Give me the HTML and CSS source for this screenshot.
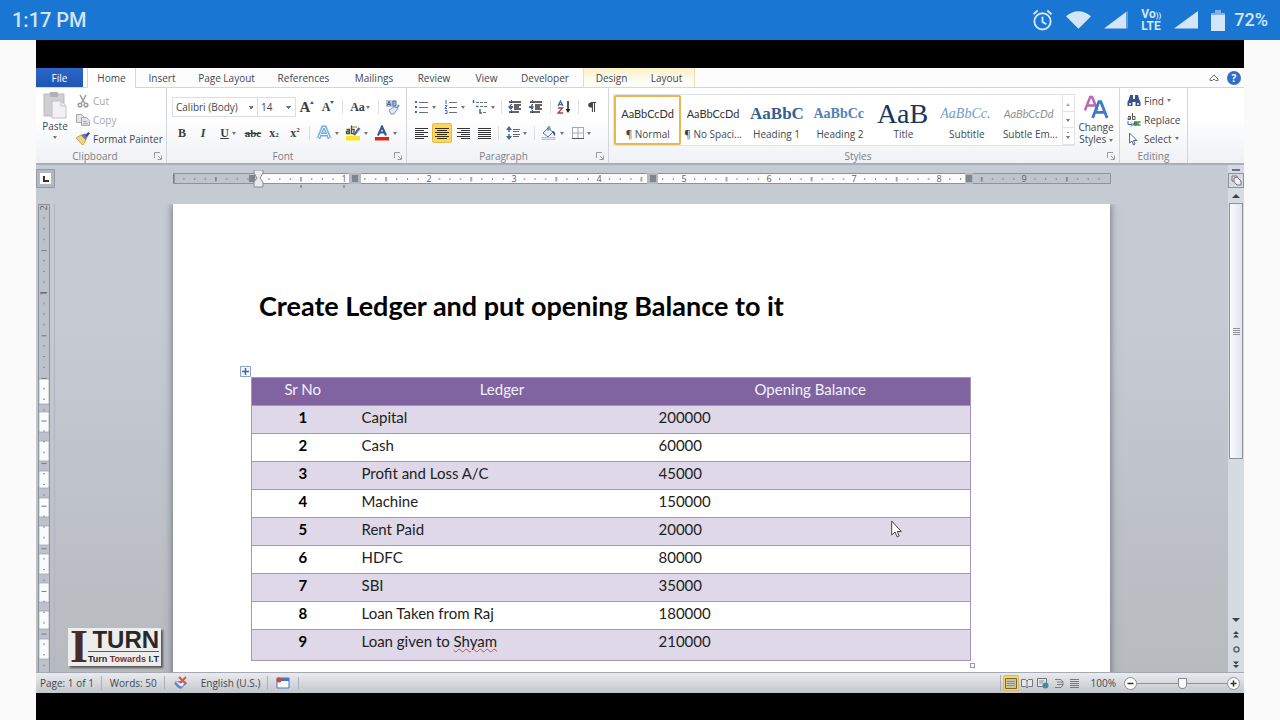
FILE: index.html
```html
<!DOCTYPE html>
<html lang="en">

<head>
    <meta charset="UTF-8" />
    <meta name="viewport" content="width=device-width, initial-scale=1.0" />
    <title>Create Ledger</title>
    <link rel="stylesheet" href="styles.css">
</head>

<body>
    <header class="phone-bar">
        <span class="clock">1:17 PM</span>
        <div class="phone-icons">
            <svg width="21" height="22" viewBox="0 0 22 23" fill="none" stroke="#d3e6f8" stroke-width="2"><circle cx="11" cy="13" r="8.500" /><path d="M11 8v5.500l4 2.500M1.500 5.500l4.500-4M20.500 5.500l-4.500-4" /></svg>
            <svg width="25" height="18" viewBox="0 0 26 18" fill="#d3e6f8"><path d="M0 5Q13-5 26 5L13 18z" /></svg>
            <svg width="24" height="18" viewBox="0 0 24 18"><path d="M0 17.500L22 1v16.500z" fill="#d3e6f8" /><path d="M22 1l2-1v17.500h-2z" fill="#5c9fe0" /></svg>
            <span class="volte"><span>Vo<small>))</small></span><span>LTE</span></span>
            <svg width="24" height="18" viewBox="0 0 24 18"><path d="M0 17.500L24 0v17.500z" fill="#d3e6f8" /></svg>
            <svg width="14" height="21" viewBox="0 0 14 21"><path d="M4 0h6v3h4v3H0V3h4z" fill="#7fb4e6" /><path d="M0 5h14v16H0z" fill="#d3e6f8" /></svg>
            <span class="battery">72%</span>
        </div>
    </header>

    <main class="video">
        <div class="word">
            <nav class="tabs">
                <button class="tab file">File</button>
                <button class="tab home">Home</button>
                <button class="tab insert">Insert</button>
                <button class="tab wide">Page Layout</button>
                <button class="tab wide">References</button>
                <button class="tab mail">Mailings</button>
                <button class="tab review">Review</button>
                <button class="tab view">View</button>
                <button class="tab dev">Developer</button>
                <div class="tool-tabs">
                    <button class="tab">Design</button>
                    <button class="tab">Layout</button>
                </div>
                <div class="help">
                    <button aria-label="Minimize the ribbon"><svg width="10" height="8" viewBox="0 0 10 8" fill="none" stroke="#6a6f78"><path d="M1 5l4-4 4 4v1.500H6.500L5 5 3.500 6.500H1z" /></svg></button>
                    <button class="help-btn" aria-label="Help">?</button>
                </div>
            </nav>

            <section class="ribbon">
                <div class="group clipboard">
                    <div class="group-body">
                        <button class="paste">
                            <svg width="26" height="28" viewBox="0 0 26 28"><path d="M2 3h20v22H2z" fill="#cfcfd1" stroke="#b9b9bc" /><path d="M8 1h8v5H8z" fill="#b2b2b5" /><path d="M10 10h9l5 5v12H10z" fill="#f1f1f2" stroke="#c2c2c5" /><path d="M19 10v5h5" fill="none" stroke="#c2c2c5" /></svg>
                            <span>Paste</span>
                            <i class="arrow"></i>
                        </button>
                        <div class="stack">
                            <button class="row off"><svg width="14" height="14" viewBox="0 0 14 14" fill="none" stroke="#9b9b9e" stroke-width="1.500"><path d="M4 1l4.500 8M10 1L5.500 9" /><circle cx="4" cy="11" r="1.800" /><circle cx="10" cy="11" r="1.800" /></svg>Cut</button>
                            <button class="row off"><svg width="14" height="14" viewBox="0 0 14 14" fill="#e3e3e5" stroke="#a9a9ac"><path d="M.5 1.500h5l2 2v6h-7z" /><path d="M5.500 4.500h5l3 3v5h-8z" /><path d="M7 8.500h4M7 10.500h5" /></svg>Copy</button>
                            <button class="row"><svg width="14" height="14" viewBox="0 0 14 14"><path d="M0 6l5-3 5 5-3 5q-2-1-4-4z" fill="#f2d27a" stroke="#b18a35" stroke-width=".7" /><path d="M5 3l4-1.500 2.500 3L10 8z" fill="#6974b8" /><path d="M9 3l3.500-3L14 1.500 11 5z" fill="#434a86" /></svg>Format Painter</button>
                        </div>
                    </div>
                    <div class="group-name">Clipboard<svg class="launch" width="8" height="8"><use href="#launch" /></svg></div>
                </div>

                <div class="group font">
                    <div class="group-body rows">
                        <div class="tools">
                            <div class="combos">
                                <select class="face" aria-label="Font"><option>Calibri (Body)</option></select>
                                <select class="size" aria-label="Font size"><option>14</option></select>
                            </div>
                            <button class="tool serif grow" aria-label="Grow font">A<i class="arrow up dark"></i></button>
                            <button class="tool serif" aria-label="Shrink font">A<i class="arrow dark"></i></button>
                            <span class="sep"></span>
                            <button class="tool dd serif case" aria-label="Change case">Aa<i class="arrow"></i></button>
                            <span class="sep"></span>
                            <button class="tool" aria-label="Clear formatting"><svg width="16" height="16" viewBox="0 0 16 16"><path d="M2 1h11v7H2z" fill="#b9c9e2" /><path d="M3 7l2-5 2 5M3.500 5.500h3M9 2v5h2q2-1.500 0-2.500 1.500-1 0-2.500z" fill="none" stroke="#4f668f" /><path d="M5 11l5-3 4 1-4 6H7z" fill="#dfe8f6" stroke="#7f97bf" /><path d="M13 9l2-3" stroke="#7f97bf" stroke-width="2" /></svg></button>
                        </div>
                        <div class="tools">
                            <button class="tool serif bold">B</button>
                            <button class="tool serif italic">I</button>
                            <button class="tool dd serif under">U<i class="arrow"></i></button>
                            <button class="tool serif strike">abc</button>
                            <button class="tool serif">x<sub>2</sub></button>
                            <button class="tool serif">x<sup>2</sup></button>
                            <span class="sep"></span>
                            <button class="tool dd" aria-label="Text effects"><svg width="16" height="16" viewBox="0 0 16 16" fill="none"><path d="M2.500 13.500L7 2.500h2l4.500 11M5 9.500h6" stroke="#a3cdf0" stroke-width="4.500" /><path d="M2.500 13.500L7 2.500h2l4.500 11M5 9.500h6" stroke="#5f9fd6" stroke-width="2.500" /><path d="M2.500 13.500L7 2.500h2l4.500 11M5 9.500h6" stroke="#fff" /></svg><i class="arrow"></i></button>
                            <button class="tool dd" aria-label="Text highlight colour"><svg width="16" height="16" viewBox="0 0 16 16"><path d="M1 11h14v4.500H1z" fill="#fbe62b" /><path d="M1.500 4.500h3v4h-3v-2h3M6.500 .5v8h2.500v-4H6.500" fill="none" stroke="#57501d" stroke-width="1.300" /><path d="M9 10l5.500-7" stroke="#596ca0" stroke-width="2.500" /><path d="M7 2h5" stroke="#8b8133" /></svg><i class="arrow"></i></button>
                            <button class="tool dd" aria-label="Font colour"><svg width="16" height="16" viewBox="0 0 16 16"><path d="M1 12h14v3.500H1z" fill="#e02418" /><path d="M4 10.500L8 1.500l4 9M5.500 7.500h5" fill="none" stroke="#34548f" stroke-width="2" /></svg><i class="arrow"></i></button>
                        </div>
                    </div>
                    <div class="group-name">Font<svg class="launch" width="8" height="8"><use href="#launch" /></svg></div>
                </div>

                <div class="group paragraph">
                    <div class="group-body rows">
                        <div class="tools">
                            <button class="tool dd" aria-label="Bullets"><svg width="14" height="14" viewBox="0 0 14 14"><path d="M0 1h2v2H0zM0 6h2v2H0zM0 11h2v2H0z" fill="#3e66ad" /><path d="M4 2.500h9M4 7.500h9M4 12.500h9" stroke="#6b6f76" /></svg><i class="arrow"></i></button>
                            <button class="tool dd" aria-label="Numbering"><svg width="14" height="14" viewBox="0 0 14 14"><path d="M2 0v4M1 5.500h2l-2 3h2M1 10.500h2v3H1" stroke="#3e66ad" fill="none" /><path d="M5 2.500h8M5 7.500h8M5 12.500h8" stroke="#6b6f76" /></svg><i class="arrow"></i></button>
                            <button class="tool dd" aria-label="Multilevel list"><svg width="16" height="14" viewBox="0 0 16 14"><path d="M1.500 0v3M4 6.500h2.500M8 9v4h2" stroke="#3e66ad" fill="none" stroke-width="1.500" /><path d="M4 2.500h11M8 6.500h7M11 12.500h4" stroke="#6b6f76" stroke-dasharray="3 1" /></svg><i class="arrow"></i></button>
                            <span class="sep"></span>
                            <button class="tool" aria-label="Decrease indent"><svg width="14" height="14" viewBox="0 0 14 14"><path d="M3.500 0v14" stroke="#555" stroke-dasharray="1 1" /><path d="M1 2h12M6 5h7M6 7h5M6 9h7M1 12h10" stroke="#333" stroke-width="1.500" /><path d="M0 7l3-3v2h2v2H3v2z" fill="#3e66ad" /></svg></button>
                            <button class="tool" aria-label="Increase indent"><svg width="14" height="14" viewBox="0 0 14 14"><path d="M3.500 0v14" stroke="#555" stroke-dasharray="1 1" /><path d="M1 2h12M6 5h7M6 7h5M6 9h7M1 12h10" stroke="#333" stroke-width="1.500" /><path d="M5 7L2 4v2H0v2h2v2z" fill="#3e66ad" /></svg></button>
                            <span class="sep"></span>
                            <button class="tool" aria-label="Sort"><svg width="14" height="14" viewBox="0 0 14 14" fill="none"><path d="M1 6l2.500-5L6 6M2 4.500h3" stroke="#3e66ad" stroke-width="1.300" /><path d="M1 8h4.500L1 13h5" stroke="#b43a3a" stroke-width="1.300" /><path d="M11 1v9" stroke="#222" stroke-width="1.500" /><path d="M8.500 9h5L11 13z" fill="#222" /></svg></button>
                            <span class="sep"></span>
                            <button class="tool" aria-label="Show marks"><svg width="10" height="12" viewBox="0 0 12 14"><path d="M6 1.500H4.500a3 3 0 0 0 0 6H6z" fill="#444" /><path d="M5 1.500h6M6.500 1.500V13M9 1.500V13" stroke="#444" fill="none" stroke-width="1.300" /></svg></button>
                        </div>
                        <div class="tools">
                            <button class="tool" aria-label="Align left"><svg width="13" height="12" viewBox="0 0 13 12"><path d="M0 1.500h13M0 3.500h9M0 5.500h13M0 7.500h9M0 9.500h13M0 11.500h9" stroke="#333" /></svg></button>
                            <button class="tool on" aria-label="Center"><svg width="14" height="12" viewBox="0 0 14 12"><path d="M0 1.500h14M2 3.500h10M0 5.500h14M2 7.500h10M0 9.500h14M2 11.500h10" stroke="#3c300c" /></svg></button>
                            <button class="tool" aria-label="Align right"><svg width="13" height="12" viewBox="0 0 13 12"><path d="M0 1.500h13M4 3.500h9M0 5.500h13M4 7.500h9M0 9.500h13M4 11.500h9" stroke="#333" /></svg></button>
                            <button class="tool" aria-label="Justify"><svg width="13" height="12" viewBox="0 0 13 12"><path d="M0 1.500h13M0 3.500h13M0 5.500h13M0 7.500h13M0 9.500h13M0 11.500h13" stroke="#333" /></svg></button>
                            <span class="sep"></span>
                            <button class="tool dd" aria-label="Line spacing"><svg width="14" height="14" viewBox="0 0 14 14"><path d="M3 2v10" stroke="#3e66ad" stroke-width="1.500" stroke-dasharray="4 2" /><path d="M0 4l3-4 3 4zM0 10l3 4 3-4z" fill="#3e66ad" /><path d="M7 3.500h7M7 5.500h6M7 8.500h7M7 10.500h6" stroke="#666" /></svg><i class="arrow"></i></button>
                            <span class="sep"></span>
                            <button class="tool dd" aria-label="Shading"><svg width="16" height="14" viewBox="0 0 16 14"><path d="M2 7l5-5 5 4-5 5z" fill="#eef3fa" stroke="#55719f" /><path d="M7 5V1q2-1.500 2 1v2" fill="none" stroke="#55719f" /><path d="M11 5q4 0 3 5-1 0-2-3z" fill="#2e5299" /><path d="M1 11.500h13v2H1z" fill="#dde4ee" stroke="#98a6bd" stroke-width=".6" /></svg><i class="arrow"></i></button>
                            <button class="tool dd" aria-label="Borders"><svg width="12" height="12" viewBox="0 0 12 12" fill="none"><path d="M.5 0v11M6 0v11M11.500 0v11M0 .5h12M0 6h12" stroke="#a5a8ae" /><path d="M0 11.500h12" stroke="#555" /></svg><i class="arrow"></i></button>
                        </div>
                    </div>
                    <div class="group-name">Paragraph<svg class="launch" width="8" height="8"><use href="#launch" /></svg></div>
                </div>

                <div class="group styles">
                    <div class="group-body">
                        <div class="gallery">
                            <button class="style picked"><span class="sample">AaBbCcDd</span><span>¶ Normal</span></button>
                            <button class="style"><span class="sample">AaBbCcDd</span><span>¶ No Spaci...</span></button>
                            <button class="style"><span class="sample h1">AaBbC</span><span>Heading 1</span></button>
                            <button class="style"><span class="sample h2">AaBbCc</span><span>Heading 2</span></button>
                            <button class="style"><span class="sample title">AaB</span><span>Title</span></button>
                            <button class="style"><span class="sample subtitle">AaBbCc.</span><span>Subtitle</span></button>
                            <button class="style"><span class="sample subtle">AaBbCcDd</span><span>Subtle Em...</span></button>
                            <div class="gallery-nav">
                                <button aria-label="Previous row"><i class="arrow up"></i></button>
                                <button aria-label="Next row"><i class="arrow"></i></button>
                                <button aria-label="More styles"><i class="arrow more"></i></button>
                            </div>
                        </div>
                        <button class="change">
                            <svg width="26" height="27" viewBox="0 0 26 28" fill="none"><path d="M1.500 17L7 3h2l5.500 14M4 12h8" stroke="#c063b4" stroke-width="2.600" /><path d="M9.500 25L16 8h2l6.500 17M12 19h10" stroke="#4079c6" stroke-width="3" /></svg>
                            <span>Change</span>
                            <span>Styles <i class="arrow"></i></span>
                        </button>
                    </div>
                    <div class="group-name">Styles<svg class="launch" width="8" height="8"><use href="#launch" /></svg></div>
                </div>

                <div class="group editing">
                    <div class="group-body">
                        <div class="stack">
                            <button class="row"><svg width="14" height="14" viewBox="0 0 14 14" fill="#35548c"><path d="M3 1h3v4h2V1h3l1 4 1.500 3v4H8.500V8h-3v4H.5V8L2 5z" /><path d="M2 9h2v2H2zM10 9h2v2h-2z" fill="#c3d3ee" /></svg>Find <i class="arrow"></i></button>
                            <button class="row"><svg width="14" height="14" viewBox="0 0 14 14" fill="none"><path d="M1 3.500h2.500v3H1v-1.500h2.500M5.500 0v6.500H8v-3H5.500" stroke="#555" /><path d="M1 8v3.500h4M4 9.500l2 2-2 2" stroke="#3e66ad" /><path d="M7 9h2.500v3H7v-1.500h2.500M13.500 9H11v3h2.500" stroke="#3a8a48" stroke-width="1.300" /></svg>Replace</button>
                            <button class="row"><svg width="14" height="14" viewBox="0 0 14 14"><path d="M2.500 1v10L5 9l1.500 4 1.500-1-1.500-3.500H10z" fill="#fff" stroke="#4f6791" /></svg>Select <i class="arrow"></i></button>
                        </div>
                    </div>
                    <div class="group-name">Editing</div>
                </div>
            </section>

            <section class="workspace">
                <div class="corner"><button class="tab-stop" aria-label="Tab selector"><svg width="6" height="6" viewBox="0 0 6 6"><path d="M1 0v5h5" fill="none" stroke="#333" stroke-width="2" /></svg></button></div>

                <div class="ruler-top">
                    <svg width="938" height="18" viewBox="0 0 938 18">
                        <defs>
                            <pattern id="ticks" x="85.500" y="0" width="85.100" height="10" patternUnits="userSpaceOnUse">
                                <path d="M10.600 4v2M21.300 4v2M31.900 4v2M53.200 4v2M63.800 4v2M74.500 4v2" stroke="#85888f" />
                                <path d="M42.500 3v4.500" stroke="#55585f" />
                            </pattern>
                        </defs>
                        <path d="M.5 3.500h937v10H.5z" fill="#c0c4cc" stroke="#8e929b" />
                        <path d="M86 4h90v9H86zM188 4h286v9H188zM485 4h307v9H485z" fill="#fbfbfc" />
                        <path d="M1 0h936v9H1z" fill="url(#ticks)" transform="translate(0 4)" />
                        <path d="M176 3h12v11h-12zM474 3h11v11h-11zM792 3h8v11h-8z" fill="#b4b8c0" />
                        <path d="M179 5h6v7h-6zM477 5h6v7h-6zM793 5h6v7h-6zM76 5h6v7h-6z" fill="#80848d" />
                        <path d="M81 0h9v3l-3 5 3 4v5h-9v-5l3-4-3-5z" fill="#ebebed" stroke="#888b92" />
                        <g class="ruler-num">
                            <text x="171" y="12">1</text><text x="256" y="12">2</text><text x="341" y="12">3</text>
                            <text x="426" y="12">4</text><text x="511" y="12">5</text><text x="596" y="12">6</text>
                            <text x="681" y="12">7</text><text x="766" y="12">8</text><text x="851" y="12">9</text>
                        </g>
                        <path d="M1 4v9M128 15v3M171 15v3" stroke="#666a72" />
                    </svg>
                </div>

                <div class="ruler-side">
                    <svg width="12" height="468" viewBox="0 0 12 468">
                        <defs>
                            <pattern id="side-ticks" x="0" y="3.500" width="12" height="42.600" patternUnits="userSpaceOnUse">
                                <path d="M5 10.600h2M5 21.300h2M5 31.900h2" stroke="#85888f" />
                                <path d="M3.500 .5h5" stroke="#74777e" />
                            </pattern>
                        </defs>
                        <path d="M.5 .5h11v480H.5z" fill="#bdc1ca" stroke="#8e929b" />
                        <path d="M1 175h10v25H1zM1 208h10v20H1zM1 237h10v20H1zM1 267h10v17H1zM1 294h10v19H1zM1 322h10v19H1zM1 350h10v20H1zM1 379h10v19H1zM1 407h10v18H1zM1 435h10v20H1z" fill="#fafbfc" stroke="#9da1aa" stroke-width=".7" />
                        <path d="M0 8h12v460H0z" fill="url(#side-ticks)" />
                        <g class="ruler-num"><text transform="translate(9 4) rotate(-90)">2</text><text transform="translate(9 89) rotate(-90)">1</text></g>
                    </svg>
                </div>

                <div class="canvas">
                    <article class="page">
                        <h1>Create Ledger and put opening Balance to it</h1>
                        <div class="table-wrap">
                            <svg class="move" width="11" height="11" viewBox="0 0 11 11"><path d="M.5 .5h10v10H.5z" fill="#f4f8fd" stroke="#8aa4c8" /><path d="M5.500 2v7M2 5.500h7" stroke="#3f66a5" stroke-width="1.500" /></svg>
                            <table>
                                <colgroup><col class="col-no"><col class="col-ledger"><col></colgroup>
                                <thead>
                                    <tr><th><span class="typo">Sr</span> No</th><th>Ledger</th><th>Opening Balance</th></tr>
                                </thead>
                                <tbody>
                                    <tr><th>1</th><td>Capital</td><td>200000</td></tr>
                                    <tr><th>2</th><td>Cash</td><td>60000</td></tr>
                                    <tr><th>3</th><td>Profit and Loss A/C</td><td>45000</td></tr>
                                    <tr><th>4</th><td>Machine</td><td>150000</td></tr>
                                    <tr><th>5</th><td>Rent Paid</td><td>20000</td></tr>
                                    <tr><th>6</th><td>HDFC</td><td>80000</td></tr>
                                    <tr><th>7</th><td>SBI</td><td>35000</td></tr>
                                    <tr><th>8</th><td>Loan Taken from Raj</td><td>180000</td></tr>
                                    <tr><th>9</th><td>Loan given to <span class="typo">Shyam</span></td><td>210000</td></tr>
                                </tbody>
                            </table>
                            <span class="resize"></span>
                            <svg class="pointer" width="11" height="18" viewBox="0 0 11 18"><path d="M.7 1v14l3.300-3 2.200 5 2-1-2-4.500h4.100z" fill="#fff" stroke="#45434f" /></svg>
                        </div>
                    </article>
                </div>

                <div class="scroll">
                    <span class="split"></span>
                    <button class="browse" aria-label="View ruler"><svg width="11" height="11" viewBox="0 0 11 11" fill="#f3eef3" stroke="#71717c"><path d="M1 1h5v5H1z" /><path d="M3 3l3-1 4 4v4H6L3 7z" /></svg></button>
                    <button class="step" aria-label="Scroll up"><i class="arrow up big"></i></button>
                    <div class="thumb"><span></span></div>
                    <div class="track"></div>
                    <button class="step" aria-label="Scroll down"><i class="arrow big"></i></button>
                    <button class="step" aria-label="Previous page"><svg width="6" height="7" viewBox="0 0 6 7" fill="#3f434b"><path d="M3 0l3 3H0zM3 3.500l3 3H0z" /></svg></button>
                    <button class="step" aria-label="Browse object"><svg width="7" height="7" viewBox="0 0 7 7" fill="none" stroke="#62666e" stroke-width="1.500"><circle cx="3.500" cy="3.500" r="2.500" /></svg></button>
                    <button class="step" aria-label="Next page"><svg width="6" height="7" viewBox="0 0 6 7" fill="#3f434b"><path d="M3 3.500l3-3H0zM3 7l3-3H0z" /></svg></button>
                </div>

                <div class="logo">
                    <span class="logo-i">I</span>
                    <div class="logo-text">
                        <strong>TURN</strong>
                        <small>Turn <em>Towards</em> I.T</small>
                    </div>
                </div>
            </section>

            <footer class="status">
                <span class="cell">Page: 1 of 1</span>
                <span class="cell">Words: 50</span>
                <button class="proof" aria-label="Proofing errors"><svg width="16" height="14" viewBox="0 0 16 14"><path d="M1 7l5-2 8 2-6 6q-4-1-7-6z" fill="#5d87c9" /><path d="M2 5l5 2 6-2-4 6q-4-2-7-6z" fill="#f7f9fc" stroke="#8ba0c3" stroke-width=".6" /><path d="M6 1l7 7M13 1L7 7" stroke="#e0553b" stroke-width="2" /></svg></button>
                <span class="cell">English (U.S.)</span>
                <button class="macro" aria-label="Record macro"><svg width="14" height="12" viewBox="0 0 14 12"><path d="M1 1h12v10H1z" fill="#f6f9fe" stroke="#4a76bc" /><path d="M1 1h12v3H1z" fill="#4a76bc" /><circle cx="3" cy="3" r="2.500" fill="#d8452f" /></svg></button>
                <div class="views">
                    <button class="on" aria-label="Print layout"><svg width="12" height="11" viewBox="0 0 12 11"><path d="M.5 .5h11v10H.5z" fill="#c8c3a0" stroke="#6e6748" /><path d="M2 3.500h8M2 5.500h8M2 7.500h8" stroke="#99926a" /></svg></button>
                    <button aria-label="Full screen reading"><svg width="12" height="11" viewBox="0 0 12 11" fill="#e6e7ea" stroke="#72757c"><path d="M.5 1.500h4L6 3l1.500-1.500h4v7h-4L6 10 4.500 8.500h-4zM6 3v7" /></svg></button>
                    <button aria-label="Web layout"><svg width="12" height="11" viewBox="0 0 12 11"><path d="M.5 .5h9v8h-9z" fill="#e6e7ea" stroke="#72757c" /><path d="M2 3h5M2 5h4" stroke="#8b8e95" /><circle cx="8.500" cy="7.500" r="3" fill="#3f8f94" /></svg></button>
                    <button aria-label="Outline"><svg width="12" height="11" viewBox="0 0 12 11" fill="none" stroke="#7a7d84"><path d="M2 1.500h6M4 4h6M4 6.500h6M2 9.500h6M8 1.500l2 2.500v3l-2 2.500" /></svg></button>
                    <button aria-label="Draft"><svg width="12" height="11" viewBox="0 0 12 11"><path d="M1 1.500h9M1 3.500h9M1 5.500h9M1 7.500h9M1 9.500h9" stroke="#74777e" /></svg></button>
                </div>
                <label for="zoom">100%</label>
                <button class="round" aria-label="Zoom out"><svg width="13" height="13" viewBox="0 0 13 13" fill="#fdfdfd" stroke="#8b8e95"><circle cx="6.500" cy="6.500" r="6" /><path d="M3.500 6.500h6" stroke="#333" stroke-width="1.500" /></svg></button>
                <input id="zoom" type="range" min="0" max="200" value="100">
                <button class="round" aria-label="Zoom in"><svg width="13" height="13" viewBox="0 0 13 13" fill="#fdfdfd" stroke="#8b8e95"><circle cx="6.500" cy="6.500" r="6" /><path d="M3.500 6.500h6M6.500 3.500v6" stroke="#333" stroke-width="1.500" /></svg></button>
            </footer>
        </div>
    </main>

    <svg width="0" height="0" class="defs">
        <symbol id="launch" viewBox="0 0 8 8"><path d="M.5 6V.5H6M4 4l3 3M7.500 3.500v4h-4" fill="none" stroke="#9a9da5" /></symbol>
    </svg>
</body>

</html>
```
FILE: styles.css
```css
:root {
    --phone: #1976d2;
    --phone-light: #d3e6f8;
    --line: #d3d6dc;
    --text: #43474f;
    --muted: #7a7f88;
    --purple: #8064a2;
    --lilac: #dfd8e8;
    --gold: #e5b94f;
}

* {
    margin: 0;
    padding: 0;
    box-sizing: border-box;
}

body {
    min-height: 100vh;
    display: flex;
    flex-direction: column;
    background: #fafafa;
    color: var(--text);
    font-family: 'Open Sans', 'Noto Sans', sans-serif;
    font-size: 10px;
    line-height: 14px;
}

button,
select {
    font: inherit;
    color: inherit;
    background: none;
    border: none;
}

svg {
    display: block;
    flex: none;
}

.defs {
    position: absolute;
}

/* phone status bar */
.phone-bar {
    height: 40px;
    display: flex;
    align-items: center;
    justify-content: space-between;
    padding: 0 12px;
    background: var(--phone);
    color: var(--phone-light);
    font-family: Roboto, sans-serif;
    font-weight: 500;
}

.clock {
    font-size: 20px;
    line-height: 24px;
}

.phone-icons {
    display: flex;
    align-items: center;
    gap: 13px;
}

.volte {
    display: flex;
    flex-direction: column;
    font-size: 12px;
    line-height: 10px;
    font-weight: 700;
}

.volte small {
    font-size: 8px;
}

.battery {
    font-size: 18px;
    margin-left: -4px;
}

.video {
    flex: 1;
    display: flex;
    margin: 0 36px;
    padding: 28px 0 27px;
    background: #000;
}

.word {
    flex: 1;
    min-width: 0;
    display: flex;
    flex-direction: column;
    background: #fdfdfd;
}

.arrow {
    display: inline-block;
    border: 2px solid transparent;
    border-top: 3px solid #72767e;
    border-bottom: 0;
    vertical-align: middle;
}

.arrow.up {
    border-top: 0;
    border-bottom: 3px solid #a9acb3;
}

.arrow.dark {
    align-self: flex-start;
    margin-top: 4px;
    border-top-color: #4b5f88;
    border-bottom-color: #4b5f88;
}

.arrow.big {
    border-width: 4px;
    border-top-color: #3f434b;
    border-bottom-width: 0;
}

.arrow.up.big {
    border-top-width: 0;
    border-bottom: 4px solid #3f434b;
}

/* ribbon tabs */
.tabs {
    height: 20px;
    display: flex;
    border-bottom: 1px solid var(--line);
}

.tab {
    flex: none;
}

.file {
    width: 47px;
    background: linear-gradient(#2b67c8, #1f55b4);
    color: #fff;
}

.home {
    width: 49px;
    margin: 0 0 -1px 4px;
    background: #fff;
    border: 1px solid var(--line);
    border-width: 0 1px;
}

.insert {
    width: 52px;
}

.wide {
    width: 77px;
}

.mail {
    width: 64px;
}

.review {
    width: 56px;
}

.view {
    width: 49px;
}

.dev {
    width: 68px;
}

.tool-tabs {
    display: flex;
    margin-left: 4px;
    border: 1px solid #eadfae;
    border-width: 0 1px;
    background: linear-gradient(#fbf0c4, #fefdf8 70%);
}

.tool-tabs .tab {
    width: 55px;
}

.help {
    margin-left: auto;
    display: flex;
    align-items: center;
    gap: 8px;
    padding-right: 3px;
}

.help-btn {
    width: 14px;
    height: 14px;
    border-radius: 50%;
    background: #2f6fc9;
    color: #fff;
    font-weight: 700;
}

/* ribbon */
.ribbon {
    height: 77px;
    display: flex;
    padding-right: 56px;
    background: linear-gradient(#fff 40%, #eff1f5);
    border-bottom: 2px solid #a9aebb;
}

.group {
    display: flex;
    flex-direction: column;
    padding-top: 3px;
    border-right: 1px solid var(--line);
}

.group-body {
    flex: 1;
    display: flex;
}

.group-name {
    display: flex;
    justify-content: center;
    align-items: center;
    height: 14px;
    color: var(--muted);
}

.group-name:has(.launch)::before {
    content: '';
    margin-right: auto;
}

.launch {
    margin: 0 4px 0 auto;
}

.clipboard {
    width: 131px;
}

.paste {
    width: 38px;
    display: flex;
    flex-direction: column;
    align-items: center;
}

.paste .arrow {
    margin-top: 3px;
}

.stack {
    display: flex;
    flex-direction: column;
}

.row {
    height: 19px;
    display: flex;
    align-items: center;
    gap: 3px;
    padding-left: 2px;
    white-space: nowrap;
}

.off {
    color: #a6a8ac;
}

.font {
    width: 240px;
    padding-left: 5px;
}

.paragraph {
    width: 202px;
    padding-left: 4px;
}

.rows {
    flex-direction: column;
    gap: 6px;
    padding-top: 6px;
}

.tools {
    display: flex;
    align-items: center;
    gap: 1px;
    height: 20px;
}

.combos {
    display: flex;
}

.combos select {
    appearance: none;
    height: 20px;
    padding-left: 3px;
    border: 1px solid #dcdee3;
    background: linear-gradient(45deg, transparent 50%, #72767e 50%) right 6px center / 3px 3px no-repeat, linear-gradient(-45deg, transparent 50%, #72767e 50%) right 3px center / 3px 3px no-repeat, #fff;
}

.combos .face {
    width: 86px;
}

.combos .size {
    width: 38px;
    border-left: none;
}

.tool {
    width: 20px;
    height: 20px;
    display: flex;
    align-items: center;
    justify-content: center;
    border-radius: 2px;
}

.dd {
    width: 28px;
    gap: 3px;
}

.on {
    background: #fbd55c;
    border: 1px solid var(--gold);
    border-radius: 2px;
}

.sep {
    width: 6px;
    height: 14px;
    background: linear-gradient(#dcdfe4, #dcdfe4) center / 1px 100% no-repeat;
}

.serif {
    font-family: 'Liberation Serif', serif;
    font-weight: 700;
    font-size: 12px;
    color: #3a3d44;
}

.serif sup,
.serif sub {
    font-size: 7px;
    line-height: 7px;
}

.serif sup {
    align-self: flex-start;
    margin-top: 4px;
}

.serif sub {
    align-self: flex-end;
    margin-bottom: 4px;
}

.grow {
    font-size: 15px;
}

.case {
    gap: 1px;
}

.italic {
    font-style: italic;
}

.under {
    text-decoration: underline;
}

.strike {
    font-size: 11px;
    text-decoration: line-through;
}

.styles {
    flex: 1;
    min-width: 0;
}

.styles .group-body {
    padding: 3px 2px 0 4px;
}

.gallery {
    flex: 1;
    min-width: 0;
    display: flex;
    height: 52px;
    border: 1px solid #e1e3e8;
    background: #fff;
}

.style {
    flex: 1;
    min-width: 0;
    display: flex;
    flex-direction: column;
    align-items: center;
    justify-content: flex-end;
    padding-bottom: 4px;
    white-space: nowrap;
}

.picked {
    border: 2px solid var(--gold);
    border-radius: 2px;
    padding-bottom: 2px;
}

.sample {
    width: 53px;
    height: 26px;
    overflow: hidden;
    color: #333;
    font-family: Lato, sans-serif;
    font-size: 11px;
    line-height: 26px;
    text-align: left;
}

.h1,
.h2,
.title,
.subtitle {
    font-family: 'Liberation Serif', serif;
}

.h1 {
    font-size: 17px;
    font-weight: 700;
    color: #365f91;
}

.h2 {
    font-size: 14px;
    font-weight: 700;
    color: #4f81bd;
}

.title {
    font-size: 28px;
    color: #17365d;
}

.subtitle {
    font-size: 14px;
    font-style: italic;
    color: #6f9bcf;
}

.subtle {
    font-style: italic;
    color: #8f8f8f;
}

.gallery-nav {
    width: 12px;
    display: flex;
    flex-direction: column;
    border-left: 1px solid #e1e3e8;
}

.gallery-nav button {
    flex: 1;
    line-height: 8px;
    border-bottom: 1px solid #e1e3e8;
}

.arrow.more {
    box-shadow: 0 -5px 0 -1px #8a8d95;
}

.change {
    width: 42px;
    display: flex;
    flex-direction: column;
    align-items: center;
    line-height: 12px;
}

.editing {
    width: 68px;
}

.editing .stack {
    padding-left: 5px;
}

/* document area */
.workspace {
    flex: 1;
    min-height: 0;
    position: relative;
    display: grid;
    grid-template-columns: 19px minmax(0, 1fr) 16px;
    grid-template-rows: 39px minmax(0, 1fr);
    background: linear-gradient(#c6cad3, #c6cad3 30%, #b7bbbf);
}

.corner {
    padding-top: 4px;
}

.tab-stop {
    width: 19px;
    height: 19px;
    display: grid;
    place-items: center;
    border: 4px solid #b4b8c2;
    background: #fdfdfd;
    outline: 1px solid #969aa5;
    outline-offset: -1px;
}

.ruler-top {
    display: flex;
    justify-content: center;
    padding-top: 5px;
}

.ruler-num {
    font-size: 9px;
    fill: #5d6169;
    text-anchor: middle;
}

.ruler-side {
    grid-row: 2;
    grid-column: 1;
    padding-left: 2px;
    overflow: hidden;
    border-right: 1px solid #b0b4be;
}

.canvas {
    grid-row: 2;
    grid-column: 2;
    height: 468px;
    display: flex;
    justify-content: center;
    overflow: hidden;
}

.page {
    width: 937px;
    height: 1200px;
    padding: 82px 78px;
    background: #fff;
    box-shadow: 0 0 8px rgba(60, 64, 75, 0.7);
    color: #222;
    font-family: Lato, sans-serif;
}

.page h1 {
    padding-left: 8px;
    color: #000;
    font-size: 27px;
    line-height: 40px;
}

.table-wrap {
    position: relative;
    width: 720px;
    margin-top: 51px;
}

table {
    width: 100%;
    table-layout: fixed;
    border-collapse: collapse;
    border: 1px solid #a596bd;
    font-size: 15px;
    line-height: 22px;
}

.col-no {
    width: 102px;
}

.col-ledger {
    width: 297px;
}

tr {
    height: 28px;
    border-bottom: 1px solid #a596bd;
}

thead tr {
    background: var(--purple);
    color: #f5f0fa;
}

thead th {
    font-weight: 400;
}

tbody th {
    color: #000;
}

tbody tr:nth-child(odd) {
    background: var(--lilac);
}

tbody tr:last-child {
    height: 31px;
}

td,
th {
    vertical-align: top;
    padding: 0 8px;
}

td {
    text-align: left;
}

.typo {
    text-decoration: underline wavy #d04a4a 1px;
    text-underline-offset: 1px;
}

.move,
.resize,
.pointer {
    position: absolute;
}

.move {
    left: -11px;
    top: -11px;
}

.resize {
    right: -4px;
    bottom: -7px;
    width: 5px;
    height: 5px;
    border: 1px solid #9a9aa0;
    background: #fff;
}

.pointer {
    left: 640px;
    top: 143px;
}

.scroll {
    grid-row: 1 / 3;
    grid-column: 3;
    display: flex;
    flex-direction: column;
    background: #d5dae3;
}

.split {
    height: 2px;
    margin: 4px 4px 2px;
    background: #6c707a;
}

.browse {
    height: 15px;
    display: grid;
    place-items: center;
    border: 1px solid #8e929b;
}

.step {
    height: 15px;
    display: grid;
    place-items: center;
}

.thumb {
    flex: 5;
    display: grid;
    place-items: center;
    margin: 0 1px;
    border: 1px solid #8e929b;
    background: linear-gradient(90deg, #fafbfd, #dfe4ef);
}

.thumb span {
    width: 7px;
    height: 7px;
    background: repeating-linear-gradient(#8e929b 0 1px, transparent 1px 2px);
}

.track {
    flex: 3;
}

.logo {
    position: absolute;
    left: 32px;
    bottom: 6px;
    display: flex;
    padding: 0 2px;
    height: 38px;
    background: #eeedee;
    box-shadow: 2px 2px 2px #555;
    color: #262829;
}

.logo-i {
    font-family: 'Liberation Serif', serif;
    font-weight: 700;
    font-size: 46px;
    line-height: 38px;
    color: #4a2a2a;
}

.logo-text {
    display: flex;
    flex-direction: column;
    font-family: 'Liberation Sans', sans-serif;
}

.logo-text strong {
    font-size: 24px;
    line-height: 23px;
    text-align: right;
    border-bottom: 1px solid #8a4a48;
}

.logo-text small {
    font-size: 9px;
    font-weight: 700;
    line-height: 14px;
}

.logo-text em {
    font-style: normal;
    color: #7a2f2c;
}

/* word status bar */
.status {
    height: 21px;
    display: flex;
    align-items: center;
    padding: 0 4px;
    background: linear-gradient(#e9ebee, #c3c6cb);
    border-top: 1px solid #a5a9b1;
}

.cell {
    padding-right: 7px;
    margin-right: 8px;
    border-right: 1px solid #adb0b7;
}

.proof {
    margin-right: 12px;
}

.macro {
    padding-right: 8px;
    border-right: 1px solid #adb0b7;
}

.views {
    margin-left: auto;
    display: flex;
    padding-left: 2px;
    border-left: 1px solid #adb0b7;
}

.views button {
    width: 16px;
    height: 16px;
    display: grid;
    place-items: center;
}

.status label {
    margin: 0 8px;
}

#zoom {
    appearance: none;
    width: 90px;
    height: 14px;
    background: linear-gradient(#8e929b, #8e929b) center / 100% 1px no-repeat;
}

#zoom::-webkit-slider-thumb {
    appearance: none;
    width: 9px;
    height: 11px;
    border: 1px solid #85888f;
    border-radius: 1px 1px 5px 5px;
    background: #fafafa;
}
```
